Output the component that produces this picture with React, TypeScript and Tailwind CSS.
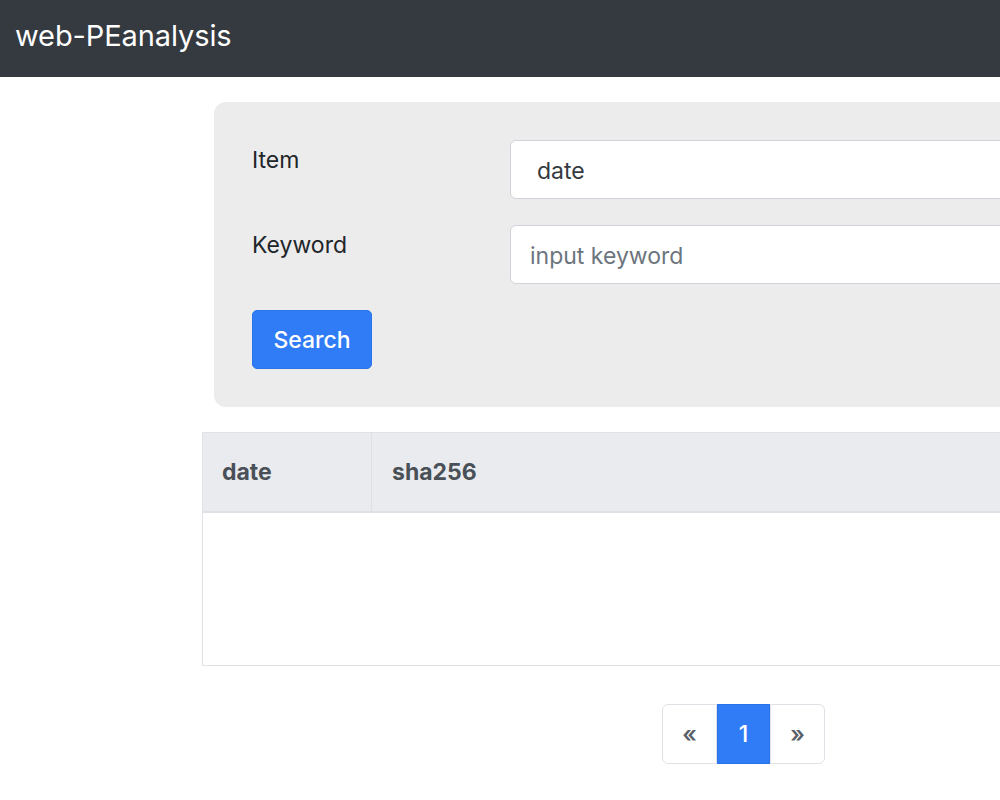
import React from "react";

export default function App() {
  const font = { fontFamily: "Inter, 'Liberation Sans', sans-serif" };
  return (
    <div className="w-[1000px] h-[800px] overflow-hidden bg-white" style={font}>
      <nav className="h-[77px] bg-[#343a40] flex items-center pl-[15px]">
        <span className="text-white text-[29px] leading-none tracking-[-0.1px] -mt-[7px]">web-PEanalysis</span>
      </nav>
      <div className="w-[1300px]">
        <div className="ml-[214px] mt-[25px] w-[1000px] bg-[#ececec] rounded-[12px] px-[38px] pt-[38px] pb-[38px]">
          <div className="flex flex-col gap-[26px]">
            <div className="flex">
              <label className="w-[258px] text-[23px] leading-[36px] pt-[2px] text-[#212529]">Item</label>
              <div className="flex-1 h-[59px] bg-white border border-[#ced4da] rounded-[6px] flex items-center pl-[26px] pt-[3px] text-[23px] text-[#343a40]">
                date
              </div>
            </div>
            <div className="flex">
              <label className="w-[258px] text-[23px] leading-[36px] pt-[2px] text-[#212529]">Keyword</label>
              <input
                className="flex-1 h-[59px] bg-white border border-[#ced4da] rounded-[6px] px-[19px] pt-[2px] text-[23px] text-[#495057] placeholder:text-[#6c757d] outline-none"
                placeholder="input keyword"
              />
            </div>
            <div>
              <button className="w-[120px] h-[59px] bg-[#2f7cf6] border border-[#2a73e8] rounded-[5px] text-white text-[23px] pt-[1px] font-medium">
                Search
              </button>
            </div>
          </div>
        </div>

        <div className="ml-[202px] mt-[25px] w-[1000px] border border-[#dfe2e6]">
          <div className="flex h-[80px] bg-[#e9ebee] border-b-2 border-[#dde0e4] items-center">
            <div className="w-[169px] h-full border-r border-[#dde0e4] flex items-center pl-[19px] text-[23px] font-bold text-[#495057]">
              date
            </div>
            <div className="flex-1 flex items-center pl-[20px] text-[23px] font-bold text-[#495057]">sha256</div>
          </div>
          <div className="h-[76px] bg-white"></div>
          <div className="h-[76px] bg-white"></div>
        </div>

        <div className="ml-[662px] mt-[38px] flex h-[60px] text-[23px]">
          <div className="w-[55px] border border-[#dee2e6] rounded-l-[6px] flex items-center justify-center text-[#5a6169] font-semibold">«</div>
          <div className="w-[53px] bg-[#2f7cf6] border border-[#2a73e8] flex items-center justify-center text-white font-medium">1</div>
          <div className="w-[55px] border border-[#dee2e6] rounded-r-[6px] flex items-center justify-center text-[#5a6169] font-semibold">»</div>
        </div>
      </div>
    </div>
  );
}
